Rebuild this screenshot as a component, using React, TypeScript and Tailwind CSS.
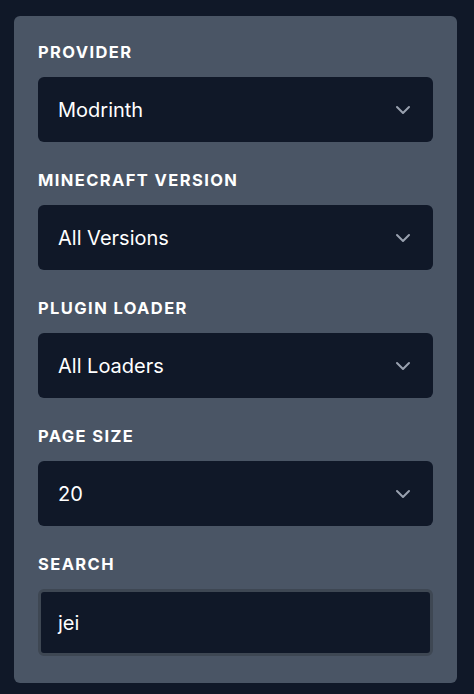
import { ChevronDown } from "lucide-react";

const fields = [
  { label: "Provider", value: "Modrinth" },
  { label: "Minecraft Version", value: "All Versions" },
  { label: "Plugin Loader", value: "All Loaders" },
  { label: "Page Size", value: "20" },
];

const SelectBox = ({ value }: { value: string }) => (
  <div className="flex h-[65px] items-center justify-between rounded-md bg-gray-900 pl-5 pr-[18px] text-xl text-white">
    <span>{value}</span>
    <ChevronDown className="h-6 w-6 text-gray-400" strokeWidth={2} />
  </div>
);

export default function App() {
  return (
    <div className="min-h-[694px] bg-gray-900 px-[14px] pt-4 font-['Inter',sans-serif]">
      <div className="w-[443px] rounded-md bg-gray-600 px-6 pb-[27px] pt-6">
        {fields.map((f) => (
          <div key={f.label} className="mb-[26px]">
            <div className="mb-[13px] text-[16.5px] font-bold uppercase leading-6 tracking-[0.085em] text-white">
              {f.label}
            </div>
            <SelectBox value={f.value} />
          </div>
        ))}
        <div>
          <div className="mb-[13px] text-[16.5px] font-bold uppercase leading-6 tracking-[0.085em] text-white">
            Search
          </div>
          <div className="flex h-[67px] items-center rounded-md border-[3px] border-[#3e4753] bg-gray-900 pl-[17px] text-xl text-white">
            jei
          </div>
        </div>
      </div>
    </div>
  );
}
